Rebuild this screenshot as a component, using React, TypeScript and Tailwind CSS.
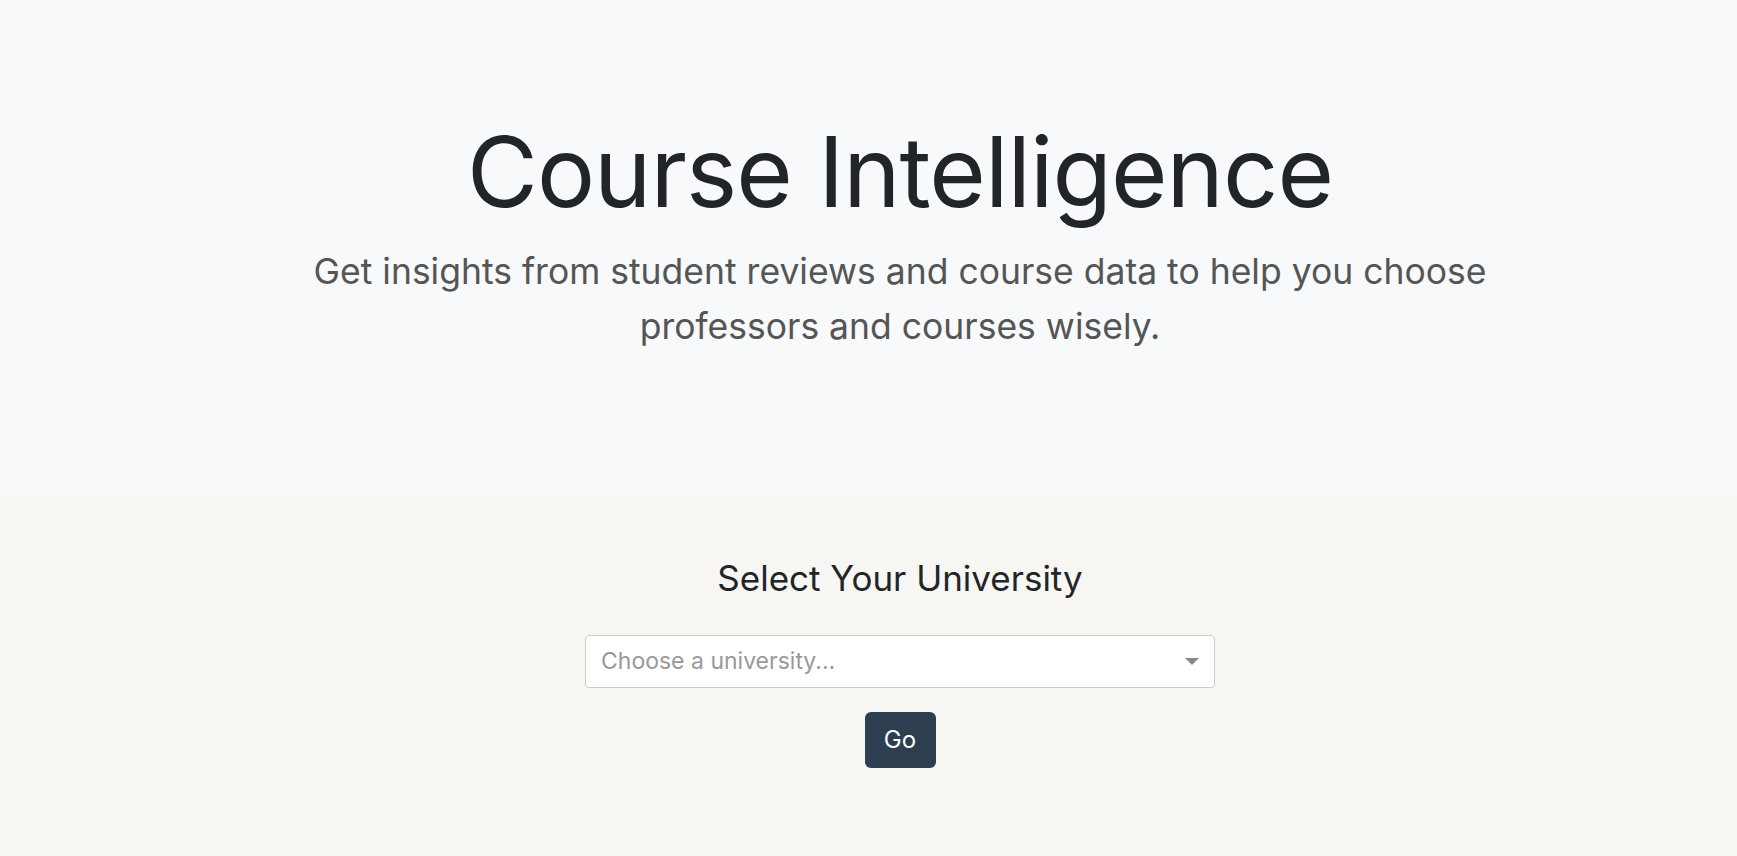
import React from "react";

export default function App() {
  return (
    <div className="min-h-[856px] flex flex-col bg-[#f7f6f2]" style={{ fontFamily: "Inter, 'Noto Sans', sans-serif" }}>
      <section className="bg-[#f8f9fa] h-[495px] flex flex-col items-center pt-[114px] pl-[63px]">
        <h1 className="text-[97px] leading-[1.2] font-normal text-[#212529] tracking-[-0.01em]">Course Intelligence</h1>
        <p className="mt-[14px] max-w-[1260px] text-center text-[35.5px] leading-[55px] text-[#555]">
          Get insights from student reviews and course data to help you choose professors and courses wisely.
        </p>
      </section>
      <section className="flex flex-col items-center pt-[62px] pl-[63px]">
        <h2 className="text-[35px] leading-[1.2] text-[#212529] font-normal">Select Your University</h2>
        <div className="mt-[36px] w-[630px] h-[53px] bg-white border border-[#ccc] rounded-[4px] flex items-center justify-between pl-[15px] pr-[15px]">
          <span className="text-[23px] text-[#999]">Choose a university...</span>
          <svg width="14" height="8" viewBox="0 0 14 8"><path d="M0 0 L14 0 L7 7 Z" fill="#888" /></svg>
        </div>
        <button className="mt-[24px] w-[71px] h-[56px] bg-[#2c3e50] text-white rounded-[6px] text-[24px]">Go</button>
      </section>
    </div>
  );
}
